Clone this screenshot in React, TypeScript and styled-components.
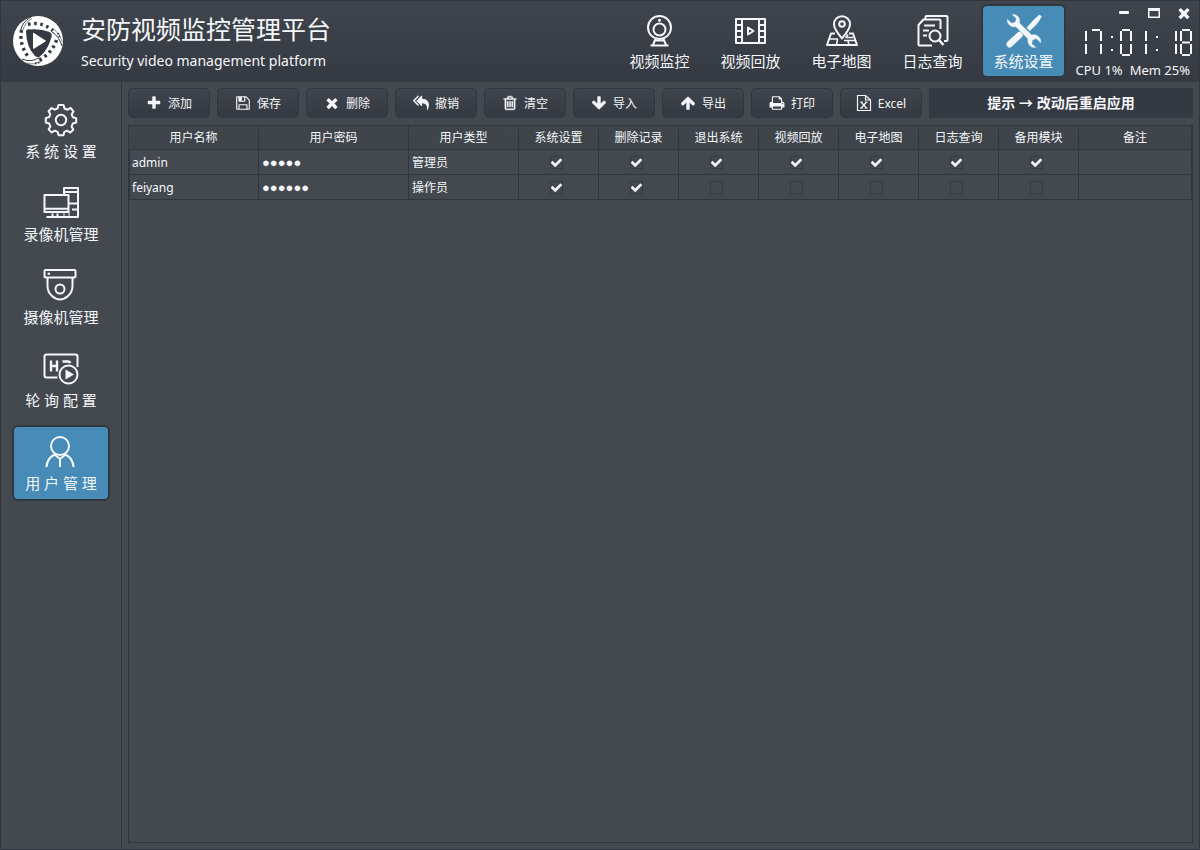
import React from "react";
import styled, { createGlobalStyle, css } from "styled-components";

const color = {
  panel: "#444950",
  border: "#32363e",
  dark: "#353941",
  light: "#40444c",
  text: "#f4f7f9",
  blue: "#478bb7",
};

const GlobalStyle = createGlobalStyle`
  *, *::before, *::after { box-sizing: border-box; }
  body {
    margin: 0;
    background: ${color.panel};
    color: ${color.text};
    font: 12px/20px "Noto Sans", "Noto Sans CJK SC", sans-serif;
  }
  button { font: inherit; color: inherit; cursor: pointer; }
`;

const Window = styled.div`
  min-height: 100vh;
  display: flex;
  flex-direction: column;
  border: 1px solid ${color.border};
  background: ${color.panel};
`;

const Header = styled.header`
  height: 81px;
  display: flex;
  background: linear-gradient(${color.light}, ${color.dark});
`;

const Brand = styled.div`
  display: flex;
  align-items: center;
  gap: 18px;
  padding: 0 0 1px 12px;
  flex: 1;
`;

const BrandText = styled.div`
  padding-top: 4px;
`;

const Title = styled.h1`
  margin: 0;
  font-size: 25px;
  line-height: 32px;
  font-weight: 400;
`;

const Subtitle = styled.p`
  margin: 4px 0 0;
  font-size: 14px;
  line-height: 24px;
`;

const TopNav = styled.nav`
  display: flex;
  gap: 6px;
  padding: 3px 7px 4px 0;
`;

const activeItem = css`
  background: ${color.blue};
  border-color: ${color.border};
`;

const NavButton = styled.button<{ $active?: boolean }>`
  display: flex;
  flex-direction: column;
  align-items: center;
  gap: 3px;
  padding: 6px 0 0;
  width: 85px;
  border: 2px solid transparent;
  border-radius: 6px;
  background: none;
  font-size: 15px;
  line-height: 20px;
  white-space: pre;
  ${(p) => p.$active && activeItem}
`;

const SideButton = styled(NavButton)`
  width: 98px;
  height: 76px;
  padding-top: 7px;
`;

const Status = styled.div`
  display: flex;
  flex-direction: column;
  align-items: flex-end;
  width: 126px;
  padding: 4px 7px 0 0;
`;

const WindowControls = styled.div`
  display: flex;
  gap: 14px;
`;

const ControlButton = styled.button`
  display: flex;
  padding: 0;
  border: 0;
  background: none;
`;

const Clock = styled.time`
  display: flex;
  margin-top: 8px;
`;

const Usage = styled.div`
  display: flex;
  gap: 7px;
  margin-top: 5px;
  padding-right: 2px;
  font-size: 13px;
  line-height: 18px;
  white-space: nowrap;
`;

const Body = styled.div`
  flex: 1;
  display: flex;
`;

const Sidebar = styled.nav`
  flex: none;
  width: 121px;
  display: flex;
  flex-direction: column;
  align-items: center;
  gap: 7px;
  padding-top: 11px;
  border-right: 1px solid ${color.border};
`;

const Main = styled.main`
  flex: 1;
  min-width: 0;
  display: flex;
  flex-direction: column;
  gap: 7px;
  padding: 6px;
`;

const Toolbar = styled.div`
  display: flex;
  gap: 7px;
`;

const ToolButton = styled.button`
  flex: none;
  display: flex;
  align-items: center;
  justify-content: center;
  gap: 6px;
  width: 82px;
  height: 30px;
  padding: 0;
  border: 1px solid ${color.border};
  border-radius: 5px;
  background: linear-gradient(${color.light}, ${color.dark});
`;

const ToolLabel = styled.span`
  padding-top: 2px;
`;

const Notice = styled.div`
  flex: 1;
  display: flex;
  align-items: center;
  justify-content: center;
  background: ${color.dark};
  font-size: 14px;
  font-weight: 700;
`;

const TablePanel = styled.section`
  flex: 1;
  border: 1px solid ${color.border};
`;

const Table = styled.table`
  width: 100%;
  table-layout: fixed;
  border-collapse: separate;
  border-spacing: 0;
`;

const Column = styled.col<{ $width?: number }>`
  width: ${(p) => (p.$width ? `${p.$width}px` : "auto")};
`;

const HeadCell = styled.th`
  height: 24px;
  padding: 0;
  font-weight: 400;
  background: linear-gradient(#40444b, #3f434a);
  border: solid ${color.border};
  border-width: 0 1px 1px 0;
`;

const Cell = styled.td`
  height: 25px;
  padding: 2px 3px 0;
  border: solid ${color.border};
  border-width: 0 1px 1px 0;

  &:first-child {
    padding-left: 2px;
    border-left-width: 1px;
  }
`;

const CheckCell = styled(Cell)`
  padding: 0 4px 0 0;
`;

const Mask = styled.span`
  font-family: "Liberation Sans", sans-serif;
  font-size: 13px;
`;

const CheckLabel = styled.label`
  display: grid;
  place-items: center;
  & > * {
    grid-area: 1 / 1;
  }
  & > svg {
    visibility: hidden;
    pointer-events: none;
  }
  & > input:checked + svg {
    visibility: visible;
  }
`;

const CheckBox = styled.input`
  appearance: none;
  width: 13px;
  height: 13px;
  margin: 0;
  border: 1px solid #383c44;
`;

const Glyph = ({ d, size = 16, outline = 0 }: { d: string; size?: number; outline?: number }) => (
  <svg
    width={size}
    height={size}
    viewBox="0 0 1792 1792"
    fill="currentColor"
    stroke="currentColor"
    strokeWidth={outline}
    aria-hidden="true"
  >
    <path d={d} />
  </svg>
);

const LineIcon = ({ children }: { children: React.ReactNode }) => (
  <svg
    width="36"
    height="36"
    viewBox="0 0 36 36"
    fill="none"
    stroke="currentColor"
    strokeWidth="2"
    strokeLinejoin="round"
    aria-hidden="true"
  >
    {children}
  </svg>
);

const glyphs = {
  plus: "M1600 736v192q0 40-28 68t-68 28h-416v416q0 40-28 68t-68 28h-192q-40 0-68-28t-28-68v-416h-416q-40 0-68-28t-28-68v-192q0-40 28-68t68-28h416v-416q0-40 28-68t68-28h192q40 0 68 28t28 68v416h416q40 0 68 28t28 68z",
  times: "M1490 1322q0 40-28 68l-136 136q-28 28-68 28t-68-28l-294-294-294 294q-28 28-68 28t-68-28l-136-136q-28-28-28-68t28-68l294-294-294-294q-28-28-28-68t28-68l136-136q28-28 68-28t68 28l294 294 294-294q28-28 68-28t68 28l136 136q28 28 28 68t-28 68l-294 294 294 294q28 28 28 68z",
  check: "M1671 566q0 40-28 68l-724 724-136 136q-28 28-68 28t-68-28l-136-136-362-362q-28-28-28-68t28-68l136-136q28-28 68-28t68 28l294 295 656-657q28-28 68-28t68 28l136 136q28 28 28 68z",
  save: "M512 1536h768v-384h-768v384zm896 0h128v-896q0-14-10-38.5t-20-34.5l-281-281q-10-10-34-20t-39-10v416q0 40-28 68t-68 28h-576q-40 0-68-28t-28-68v-416h-128v1280h128v-416q0-40 28-68t68-28h832q40 0 68 28t28 68v416zm-384-928v-320q0-13-9.5-22.5t-22.5-9.5h-192q-13 0-22.5 9.5t-9.5 22.5v320q0 13 9.5 22.5t22.5 9.5h192q13 0 22.5-9.5t9.5-22.5zm640 32v928q0 40-28 68t-68 28h-1344q-40 0-68-28t-28-68v-1344q0-40 28-68t68-28h928q40 0 88 20t76 48l280 280q28 28 48 76t20 88z",
  trash: "M704 736v576q0 14-9 23t-23 9h-64q-14 0-23-9t-9-23v-576q0-14 9-23t23-9h64q14 0 23 9t9 23zm256 0v576q0 14-9 23t-23 9h-64q-14 0-23-9t-9-23v-576q0-14 9-23t23-9h64q14 0 23 9t9 23zm256 0v576q0 14-9 23t-23 9h-64q-14 0-23-9t-9-23v-576q0-14 9-23t23-9h64q14 0 23 9t9 23zm128 724v-948h-896v948q0 22 7 40.5t14.5 27 10.5 8.5h832q3 0 10.5-8.5t14.5-27 7-40.5zm-672-1076h448l-48-117q-7-9-17-11h-317q-10 2-17 11zm928 32v64q0 14-9 23t-23 9h-96v948q0 83-47 143.5t-113 60.5h-832q-66 0-113-58.5t-47-141.5v-952h-96q-14 0-23-9t-9-23v-64q0-14 9-23t23-9h309l70-167q15-37 54-63t79-26h320q40 0 79 26t54 63l70 167h309q14 0 23 9t9 23z",
  down: "M1675 832q0 53-37 90l-651 652q-39 37-91 37-53 0-90-37l-651-652q-38-36-38-90 0-53 38-91l74-75q39-37 91-37 53 0 90 37l294 294v-704q0-52 38-90t90-38h128q52 0 90 38t38 90v704l294-294q37-37 90-37 52 0 91 37l75 75q37 39 37 91z",
  up: "M1675 971q0 51-37 90l-75 75q-38 38-91 38-54 0-90-38l-294-293v704q0 52-37.5 84.5t-90.5 32.5h-128q-53 0-90.5-32.5t-37.5-84.5v-704l-294 293q-36 38-90 38t-90-38l-75-75q-38-38-38-90 0-53 38-91l651-651q35-37 90-37 54 0 91 37l651 651q37 39 37 91z",
  print: "M448 1536h896v-256h-896v256zm0-640h896v-384h-160q-40 0-68-28t-28-68v-160h-640v640zm1152 64q0-26-19-45t-45-19-45 19-19 45 19 45 45 19 45-19 19-45zm128 0v416q0 13-9.5 22.5t-22.5 9.5h-224v160q0 40-28 68t-68 28h-960q-40 0-68-28t-28-68v-160h-224q-13 0-22.5-9.5t-9.5-22.5v-416q0-79 56.5-135.5t135.5-56.5h64v-544q0-40 28-68t68-28h672q40 0 88 20t76 48l152 152q28 28 48 76t20 88v256h64q79 0 135.5 56.5t56.5 135.5z",
  replyAll: "M640 1082v70q0 42-39 59-13 5-25 5-27 0-45-19l-512-512q-19-19-19-45t19-45l512-512q29-31 70-14 39 17 39 59v69l-397 398q-19 19-19 45t19 45zm1152 58q0 58-17 133.5t-38.5 138-48 125-40.5 90.5l-20 40q-8 17-28 17-6 0-9-1-25-8-23-34 43-400-106-565-64-71-170.5-110.5t-267.5-52.5v251q0 42-39 59-13 5-25 5-27 0-45-19l-512-512q-19-19-19-45t19-45l512-512q29-31 70-14 39 17 39 59v262q411 28 599 221 169 173 169 509z",
};

const ExcelIcon = () => (
  <svg width="16" height="16" viewBox="0 0 16 16" fill="none" stroke="currentColor" aria-hidden="true">
    <path d="M1.5.5h8l5 4.500v10.500h-13z M9.500 .5v4.500h5" strokeWidth="1.200" />
    <path d="M5.300 7.300 10.300 13 M10.300 7.300 5.300 13" strokeWidth="1.300" />
    <path d="M4.200 7.100h2.600 M9 7.100h2.600 M4.200 13.100h2.600 M9 13.100h2.600" />
  </svg>
);

const Logo = () => (
  <svg width="50" height="50" viewBox="0 0 50 50" role="img" aria-label="Logo">
    <circle cx="25" cy="25" r="25" fill="#fff" />
    <path
      d="M13 16Q13 12.500 17 13.500Q28 12.500 36.500 16Q39.500 17.500 38.500 21Q35 34 27 40.500Q24.500 42 22 40Q13.500 31 13 16Z"
      fill={color.dark}
    />
    <path d="M20.500 17.200 V32.500 L32.500 25Z" fill="#fff" stroke="#fff" strokeLinejoin="round" />
    <g fill="none" stroke={color.dark}>
      <path d="M15 8.500Q28 5 40 14.500" strokeWidth="3.400" strokeDasharray="2.600 3.600" />
      <path d="M8.500 14Q6 29 15.500 41" strokeWidth="3.400" strokeDasharray="2.700 3.400" />
      <path d="M43.500 24Q40 36 26 44.500" strokeWidth="3.400" strokeDasharray="2.700 3.400" />
      <path d="M7.500 15Q9 6 18 1" />
      <path d="M10 14Q11.500 7 19 2.500" strokeWidth=".6" />
      <path d="M38.500 15.500Q46 20 49 30" />
      <path d="M41 13Q47 18 49.500 26" strokeWidth=".6" />
      <path d="M26.500 41.500Q18 47 9 43" />
      <path d="M29 45Q21 49.500 14 47" strokeWidth=".6" />
      <path d="M22 47.500 l5 -1.500 M45 17 l2 5" strokeWidth="2" strokeDasharray="1.500 1.500" />
    </g>
  </svg>
);

const WebcamIcon = () => (
  <LineIcon>
    <circle cx="17.500" cy="15.500" r="11.500" />
    <circle cx="17.500" cy="17.500" r="6" />
    <circle cx="17.500" cy="8.300" r="1.500" fill="currentColor" stroke="none" />
    <path d="M13.500 27 11 33 M21.500 27 24 33 M8.500 33.500H26.500 M13 28.500H22" />
  </LineIcon>
);

const FilmIcon = () => (
  <LineIcon>
    <path d="M3 7H32V31H3Z M9 7V31 M26 7V31 M3 13H9 M3 19H9 M3 25H9 M26 13H32 M26 19H32 M26 25H32" />
    <path d="M15 15.500V22.500L20.500 19Z" />
  </LineIcon>
);

const MapIcon = () => (
  <LineIcon>
    <path d="M18 26.500C14 21.500 10 17 10 12.200A8 8 0 0 1 26 12.200C26 17 22 21.500 18 26.500Z" />
    <circle cx="18" cy="12" r="2.800" />
    <path d="M11 21.500H7L3 33H33L29 21.500H25" />
    <path d="M5.500 27H13.500L12.500 33 M24 22.500L22 25.500H29 M20 28.500H31 M24 28.500L25 33" strokeWidth="1.600" />
  </LineIcon>
);

const LogIcon = () => (
  <LineIcon>
    <path d="M17 33.500H4.500Q3.500 33.500 3.500 32.500V13L8.500 7.500H24.500Q25.500 7.500 25.500 8.500V17" />
    <path d="M10.500 7V5Q10.500 4 11.500 4H31.500Q32.500 4 32.500 5V28Q32.500 29 31.500 29H29" />
    <path d="M9 13.500H20 M8 18.500H14 M8 23.500H12" />
    <circle cx="20" cy="24" r="5.500" />
    <path d="M24 28 28.500 33" strokeWidth="2.600" />
  </LineIcon>
);

const ToolsIcon = () => (
  <svg width="36" height="36" viewBox="0 0 36 36" aria-hidden="true">
    <path
      d="M33.500 3 L35.200 4.700 L31 11.500 L23.800 18.500 L21 15.700 L28 8 Z"
      fill="currentColor"
      stroke="currentColor"
      strokeLinejoin="round"
    />
    <path d="M13.500 23 L3.700 32.200" stroke="currentColor" strokeWidth="6.500" strokeLinecap="round" />
    <path
      d="M5.500 2.300 Q9.500 1.300 12.500 4.500 Q14.800 7.500 13.800 11 L25.500 22.500 Q30 21.500 33 24.500 Q36 27.500 35 31.500 L30.500 27 L27 28 L26 31.500 L30.500 35.700 Q26.500 36.700 23.500 33.700 Q20.700 30.700 21.500 26.700 L9.800 15 Q6 16 3.200 13.300 Q.2 10.500 1 6.500 L5.500 11 L9 10 L10 6.500 Z"
      fill="currentColor"
      stroke={color.blue}
      strokeWidth=".4"
    />
  </svg>
);

const GearIcon = () => (
  <LineIcon>
    <path d="M15.500 3H20.500L21.500 6.500L24.500 7.700L27.600 6L30.500 9.400L28.700 12.300L29.800 15.200L33.200 16.200V20.500L29.800 21.500L28.600 24.500L30.300 27.700L27.200 30.600L24.200 28.700L21.400 29.900L20.400 33.200H15.600L14.600 29.900L11.700 28.700L8.700 30.500L5.600 27.400L7.300 24.400L6.200 21.500L2.800 20.500V16L6.200 15.100L7.300 12.200L5.600 9.200L8.700 6L11.700 7.700L14.500 6.500Z" />
    <circle cx="18" cy="18" r="5.200" />
  </LineIcon>
);

const RecorderIcon = () => (
  <LineIcon>
    <path d="M1.500 10H25.500V27H1.500Z M1.500 23.700H25.500" />
    <path d="M21 9.500V3H35V32H3.500 M21 7H35 M26 18.500H35 M29 24.500H35 M9.500 32V28.500 M14.500 28.500V32" />
    <path d="M21 32V27 M26 27V32" strokeWidth="1" />
  </LineIcon>
);

const DomeIcon = () => (
  <LineIcon>
    <rect x="1.500" y="2" width="31" height="7.500" rx="1" />
    <circle cx="5.800" cy="5.700" r="1.300" fill="currentColor" stroke="none" />
    <path d="M4.500 9.500V18Q4.500 24 9 28Q13 31.500 17 31.500Q21 31.500 25 28Q29.500 24 29.500 18V9.500" />
    <circle cx="17" cy="21" r="4.500" />
  </LineIcon>
);

const PollIcon = () => (
  <LineIcon>
    <path d="M14.500 26.500H3.500Q1.500 26.500 1.500 24.500V5.500Q1.500 3.500 3.500 3.500H32.500Q34.500 3.500 34.500 5.500V16" />
    <path d="M8 9.500V20.500 M14 9.500V20.500 M8 15H14" strokeWidth="2.400" />
    <path d="M19.500 10.500H25Q26.500 10.500 27.500 12" strokeWidth="2.400" />
    <circle cx="25.500" cy="23.500" r="9" />
    <path d="M22.500 18.500V28.500L31 23.500Z" fill="currentColor" stroke="none" />
  </LineIcon>
);

const UserIcon = () => (
  <LineIcon>
    <circle cx="17" cy="12" r="9" />
    <path d="M3.500 33Q4 24.500 11.500 20.500L17 25L22.500 20.500Q30 24.500 30.500 33 M17 25V33" />
  </LineIcon>
);

/* Seven segments per digit, in the order a b c d e f g. */
const segments = [
  [2, 1, 10, 1],
  [11, 2, 11, 12],
  [11, 15, 11, 25],
  [2, 26, 10, 26],
  [1, 15, 1, 25],
  [1, 2, 1, 12],
  [2, 13.5, 10, 13.5],
];

const litSegments: Record<string, number[]> = {
  "0": [0, 1, 2, 3, 4, 5],
  "1": [1, 2],
  "7": [0, 1, 2],
  "8": [0, 1, 2, 3, 4, 5, 6],
};

const DigitalClock = ({ value }: { value: string }) => (
  <Clock aria-label={value}>
    <svg width="117" height="27" viewBox="0 0 117 27" stroke="currentColor" strokeWidth="2" aria-hidden="true">
      {value.split("").map((char, i) => (
        <g key={i} transform={`translate(${i * 15} 0)`}>
          {char === ":" ? (
            <>
              <rect x="6" y="7" width="2" height="2" fill="currentColor" stroke="none" />
              <rect x="6" y="20" width="2" height="2" fill="currentColor" stroke="none" />
            </>
          ) : (
            litSegments[char].map((s) => {
              const [x1, y1, x2, y2] = segments[s];
              return <line key={s} x1={x1} y1={y1} x2={x2} y2={y2} />;
            })
          )}
        </g>
      ))}
    </svg>
  </Clock>
);

const topItems = [
  { label: "视频监控", icon: <WebcamIcon /> },
  { label: "视频回放", icon: <FilmIcon /> },
  { label: "电子地图", icon: <MapIcon /> },
  { label: "日志查询", icon: <LogIcon /> },
  { label: "系统设置", icon: <ToolsIcon />, active: true },
];

const sideItems = [
  { label: "系 统 设 置", icon: <GearIcon /> },
  { label: "录像机管理", icon: <RecorderIcon /> },
  { label: "摄像机管理", icon: <DomeIcon /> },
  { label: "轮 询 配 置", icon: <PollIcon /> },
  { label: "用 户 管 理", icon: <UserIcon />, active: true },
];

const tools = [
  { label: "添加", icon: <Glyph d={glyphs.plus} /> },
  { label: "保存", icon: <Glyph d={glyphs.save} /> },
  { label: "删除", icon: <Glyph d={glyphs.times} /> },
  { label: "撤销", icon: <Glyph d={glyphs.replyAll} /> },
  { label: "清空", icon: <Glyph d={glyphs.trash} outline={50} /> },
  { label: "导入", icon: <Glyph d={glyphs.down} /> },
  { label: "导出", icon: <Glyph d={glyphs.up} /> },
  { label: "打印", icon: <Glyph d={glyphs.print} /> },
  { label: "Excel", icon: <ExcelIcon /> },
];

const permissions = ["系统设置", "删除记录", "退出系统", "视频回放", "电子地图", "日志查询", "备用模块"];

const users = [
  { name: "admin", mask: "●●●●●", type: "管理员", granted: 7 },
  { name: "feiyang", mask: "●●●●●●", type: "操作员", granted: 2 },
];

export default function App() {
  return (
    <Window>
      <GlobalStyle />
      <Header>
        <Brand>
          <Logo />
          <BrandText>
            <Title>安防视频监控管理平台</Title>
            <Subtitle>Security video management platform</Subtitle>
          </BrandText>
        </Brand>
        <TopNav>
          {topItems.map((item) => (
            <NavButton key={item.label} type="button" $active={item.active}>
              {item.icon}
              {item.label}
            </NavButton>
          ))}
        </TopNav>
        <Status>
          <WindowControls>
            <ControlButton type="button" aria-label="最小化">
              <svg width="16" height="16" viewBox="0 0 16 16" fill="currentColor">
                <rect x="3" y="6" width="10" height="3" rx="1" />
              </svg>
            </ControlButton>
            <ControlButton type="button" aria-label="最大化">
              <svg width="16" height="16" viewBox="0 0 16 16" fill="currentColor">
                <path fillRule="evenodd" d="M2 3H14V13H2Z M3.500 6V11.500H12.500V6Z" />
              </svg>
            </ControlButton>
            <ControlButton type="button" aria-label="关闭">
              <Glyph d={glyphs.times} />
            </ControlButton>
          </WindowControls>
          <DigitalClock value="17:01:18" />
          <Usage>
            <span>CPU 1%</span>
            <span>Mem 25%</span>
          </Usage>
        </Status>
      </Header>
      <Body>
        <Sidebar>
          {sideItems.map((item) => (
            <SideButton key={item.label} type="button" $active={item.active}>
              {item.icon}
              {item.label}
            </SideButton>
          ))}
        </Sidebar>
        <Main>
          <Toolbar>
            {tools.map((tool) => (
              <ToolButton key={tool.label} type="button">
                {tool.icon}
                <ToolLabel>{tool.label}</ToolLabel>
              </ToolButton>
            ))}
            <Notice>提示 → 改动后重启应用</Notice>
          </Toolbar>
          <TablePanel>
            <Table>
              <colgroup>
                <Column $width={130} />
                <Column $width={150} />
                <Column $width={110} />
                {permissions.map((name) => (
                  <Column key={name} $width={80} />
                ))}
                <Column />
              </colgroup>
              <thead>
                <tr>
                  {["用户名称", "用户密码", "用户类型", ...permissions, "备注"].map((name) => (
                    <HeadCell key={name} scope="col">
                      {name}
                    </HeadCell>
                  ))}
                </tr>
              </thead>
              <tbody>
                {users.map((user) => (
                  <tr key={user.name}>
                    <Cell>{user.name}</Cell>
                    <Cell>
                      <Mask>{user.mask}</Mask>
                    </Cell>
                    <Cell>{user.type}</Cell>
                    {permissions.map((name, i) => (
                      <CheckCell key={name}>
                        <CheckLabel>
                          <CheckBox
                            type="checkbox"
                            aria-label={`${user.name} ${name}`}
                            defaultChecked={i < user.granted}
                          />
                          <Glyph d={glyphs.check} size={13} />
                        </CheckLabel>
                      </CheckCell>
                    ))}
                    <Cell />
                  </tr>
                ))}
              </tbody>
            </Table>
          </TablePanel>
        </Main>
      </Body>
    </Window>
  );
}
